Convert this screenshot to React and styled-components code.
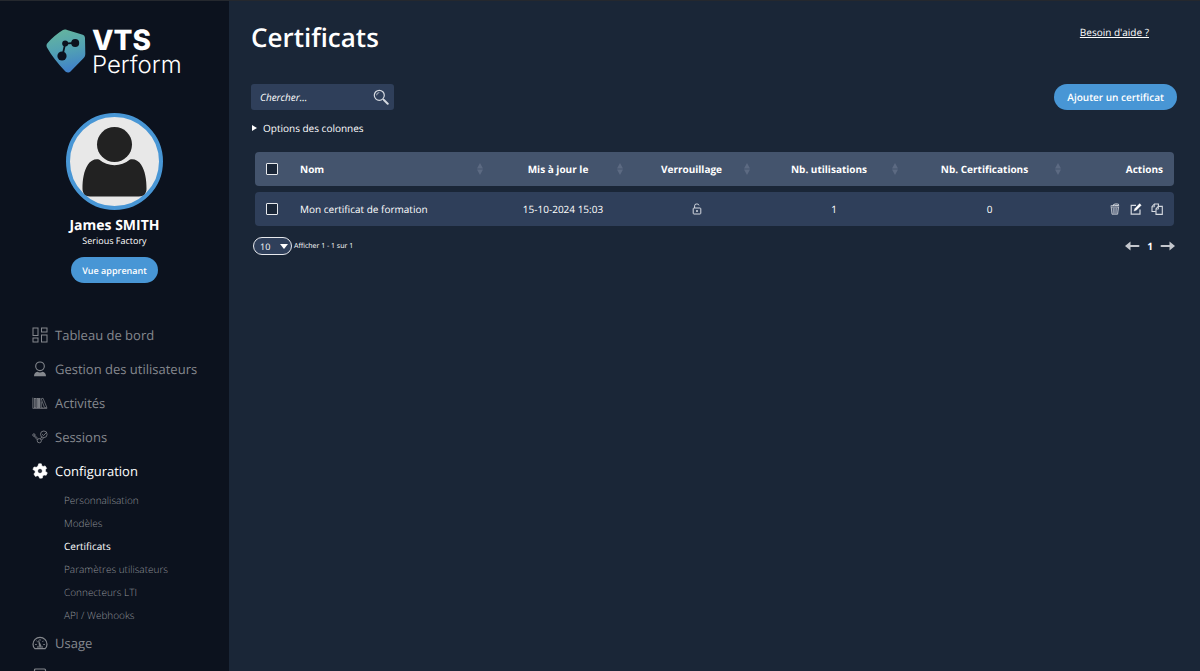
import React, { useState } from 'react'
import styled, { createGlobalStyle } from 'styled-components';

// svg icons
const DashboardIcon = () => (
  <svg width="16" height="16" viewBox="0 0 16 16" fill="none" stroke="currentColor" aria-hidden="true">
    <rect x="1" y="1" width="5" height="7.5" />
    <rect x="9.5" y="1" width="5.5" height="4" />
    <rect x="1" y="11" width="5" height="4" />
    <rect x="9.5" y="8" width="5.5" height="7" />
  </svg>
)

const UserIcon = () => (
  <svg width="16" height="16" viewBox="0 0 16 16" aria-hidden="true">
    <circle cx="8" cy="5.3" r="4.3" fill="none" stroke="currentColor" strokeWidth="1.1" />
    <path d="M2 15.3c0-2.4 1.3-3.9 3.4-4.5 1.6.8 3.6.8 5.2 0 2.1.6 3.4 2.1 3.4 4.5z" fill="currentColor" />
  </svg>
)

const BooksIcon = () => (
  <svg width="16" height="16" viewBox="0 0 16 16" fill="none" stroke="currentColor" strokeWidth="0.7" aria-hidden="true">
    <path d="M.8 2.6v10.8h14.4" />
    <rect x="2.2" y="3.4" width="2" height="9.4" fill="currentColor" fillOpacity="0.5" />
    <rect x="5.6" y="3.4" width="2.4" height="9.4" fill="currentColor" fillOpacity="0.9" />
    <path d="M9.2 3.8l1.8-.6 3.9 9.4h-2.4zM9.3 6.5v6.3h2.2" />
  </svg>
)

const SessionsIcon = () => (
  <svg width="16" height="16" viewBox="0 0 16 16" fill="none" stroke="currentColor" strokeWidth="0.8" aria-hidden="true">
    <circle cx="1.9" cy="6" r="1.2" />
    <path d="M2.2 7.3l3.1 3.6M3.1 6.7l2.800 2.900M9.500 11.200l2.300-2.600M8.500 9.800l1.400-2" />
    <circle cx="7.300" cy="11.700" r="2.100" />
    <circle cx="11.800" cy="5.300" r="3.300" />
    <path d="M10.100 5.100l1.400 1.500 3.200-3.400" />
  </svg>
)

const GearIcon = () => (
  <svg width="16" height="16" viewBox="0 0 16 16" aria-hidden="true">
    <path
      fill="currentColor"
      fillRule="evenodd"
      stroke="currentColor"
      strokeWidth="0.6"
      strokeLinejoin="round"
      d="M6.7.8h2.6l.5 2 1.3.7 2-.6 1.5 2.4-1.2 1.5.1 1.6 1.8 1.4-1.1 2.4-2.2-.2-1.2.8-.5 2.3-2.6.1-.9-1.9-1.3-.6-2.1.7L1.9 11l1.3-1.7-.1-1.5L.9 6.5l1.1-2.5 2.3.3L5.9 3.2zM8 5.7a2.300 2.300 0 1 0 0 4.600 2.300 2.300 0 0 0 0-4.600z"
    />
    <circle cx="8" cy="8" r="0.8" fill="currentColor" fillOpacity="0.3" />
  </svg>
)

const GaugeIcon = () => (
  <svg width="16" height="16" viewBox="0 0 16 16" fill="none" stroke="currentColor" strokeWidth="1.2" aria-hidden="true">
    <path d="M3 13.700C1.700 12.700 1 11 1 9.300a7 7 0 0 1 14 0c0 1.700-.7 3.400-2 4.400z" />
    <path d="M3.200 9.500h1.500M4.500 5.800l1.100 1M8 4.200v1.500M11.500 5.800l-1 1M12.800 9.500h-1.500M5 12h6" strokeWidth="1" />
    <path d="M6.600 5.500l.6 5.200a.9.900 0 0 0 1.800-.2z" fill="currentColor" strokeWidth="0.5" />
  </svg>
)

const ReportIcon = () => (
  <svg width="16" height="16" viewBox="0 0 16 16" fill="none" stroke="currentColor" strokeWidth="1.2" aria-hidden="true">
    <rect x="2.5" y="1" width="11" height="14" rx="1" />
  </svg>
)

const SearchIcon = () => (
  <svg width="16" height="16" viewBox="0 0 16 16" fill="none" stroke="currentColor" aria-hidden="true">
    <circle cx="6.3" cy="6.3" r="5" strokeWidth="1.2" />
    <path d="M3.6 6.3a2.700 2.700 0 0 1 2.700-2.700" strokeWidth="0.8" />
    <path d="M10 10l1.5 1.5" strokeWidth="1.2" />
    <path d="M11.2 11.2l3.5 3.5" strokeWidth="2" strokeLinecap="round" />
  </svg>
)

const SortIcon = () => (
  <svg width="6" height="12" viewBox="0 0 6 12" fill="currentColor" aria-hidden="true">
    <path d="M3 0l3 5.4H0zM3 12L0 6.600h6z" />
  </svg>
)

const UnlockIcon = () => (
  <svg width="10" height="12" viewBox="0 0 10 12" fill="none" stroke="currentColor" role="img" aria-label="Verrouillage">
    <rect x="1.2" y="5" width="7.6" height="6" rx="0.8" />
    <path d="M2.600 5V2.800a1.800 1.800 0 0 1 1.800-1.800h.8A1.800 1.800 0 0 1 7 2.400" />
    <circle cx="5" cy="8" r="0.6" fill="currentColor" />
  </svg>
)

const TrashIcon = () => (
  <svg width="12" height="12" viewBox="0 0 12 12" fill="none" stroke="currentColor" aria-hidden="true">
    <path d="M1.500 3.100c2-.9 6-.9 8.700-.3M4 2.300C5 .7 8 .6 10 1.500" strokeWidth="1" />
    <path d="M2.200 4l.8 7.200h5.600L9.600 4z" strokeWidth="0.8" fill="currentColor" fillOpacity="0.2" />
    <path d="M4.400 5l.3 5.500M5.900 5v5.500M7.400 5l-.3 5.500" strokeWidth="0.5" />
  </svg>
)

const EditIcon = () => (
  <svg width="12" height="12" viewBox="0 0 12 12" aria-hidden="true">
    <path d="M6 2.300H1.200v8.800H10V6.500" fill="none" stroke="currentColor" strokeWidth="1.2" />
    <path d="M9.700.6l1.600 1.600L6.300 7.300l-2.400.8.800-2.400z" fill="#fff" stroke="#fff" strokeWidth="0.3" />
  </svg>
)

const CopyIcon = () => (
  <svg width="12" height="12" viewBox="0 0 12 12" fill="none" stroke="currentColor" strokeWidth="1.1" aria-hidden="true">
    <path d="M4.800 8.500H1V3.600L3.400 1h4v2.300" />
    <path d="M1 3.800h2.600V1" strokeWidth="0.8" />
    <path d="M5 5.900l2.300-2.500h4v8H5z" />
    <path d="M5 6.100h2.500V3.500" strokeWidth="0.8" />
  </svg>
)

const ArrowIcon = ({ left }) => (
  <svg width="15" height="10" viewBox="0 0 15 10" fill="currentColor" aria-hidden="true">
    {left
      ? <path d="M0 5L5.500.5V4h8a1 1 0 0 1 0 2h-8v3.500z" />
      : <path d="M15 5L9.500.5V4h-8a1 1 0 0 0 0 2h8v3.500z" />}
  </svg>
)

const LogoMark = () => (
  <svg width="40" height="44" viewBox="0 0 40 44" aria-hidden="true">
    <defs>
      <linearGradient id="logoFill" x1="0.4" y1="0" x2="0.6" y2="1">
        <stop offset="0" stopColor="#64b49f" />
        <stop offset="0.5" stopColor="#51a0b4" />
        <stop offset="1" stopColor="#3f7fcb" />
      </linearGradient>
    </defs>
    <path
      fill="url(#logoFill)"
      d="M16.500 1.200c1.600-.8 3-.7 4.600-.2L36 5.500c2 .6 3 1.800 3 3.800l.3 15.200c0 2-.3 3-1.600 4.500L25 42c-2 2.100-4.600 2-6.300-.2C11.500 34 5.500 26.500 1 18.500c-.9-1.700-.6-3.300.8-4.700C6 9 11 4.500 16.500 1.200z"
    />
    <g fill="#0c121e">
      <path d="M16.500 26.500l2.700-12 10-.6" fill="none" stroke="#0c121e" strokeWidth="1.8" />
      <circle cx="16" cy="27" r="4.6" />
      <circle cx="19.2" cy="14.5" r="3" />
      <circle cx="29.2" cy="14" r="4" />
    </g>
  </svg>
)

const AvatarIcon = () => (
  <svg width="89" height="89" viewBox="0 0 89 89" fill="#222" role="img" aria-label="James SMITH">
    <circle cx="44.5" cy="27.5" r="17.5" />
    <path d="M29 42.500c9 7.500 22 7.500 31 0 4-1 8.500 1 11 5 4.200 6.500 5.500 15 5.500 24.500 0 4.500-3 7.500-7.500 7.500H20c-4.500 0-7.500-3-7.500-7.500 0-9.500 1.300-18 5.500-24.500 2.500-4 7-6 11-5z" />
  </svg>
)

const menu = [
  { label: 'Tableau de bord', Icon: DashboardIcon },
  { label: 'Gestion des utilisateurs', Icon: UserIcon },
  { label: 'Activités', Icon: BooksIcon },
  { label: 'Sessions', Icon: SessionsIcon },
  {
    label: 'Configuration',
    Icon: GearIcon,
    active: true,
    children: ['Personnalisation', 'Modèles', 'Certificats', 'Paramètres utilisateurs', 'Connecteurs LTI', 'API / Webhooks'],
  },
  { label: 'Usage', Icon: GaugeIcon },
]

const columns = [
  { label: 'Mis à jour le', width: 140 },
  { label: 'Verrouillage', width: 127 },
  { label: 'Nb. utilisations', width: 148 },
  { label: 'Nb. Certifications', width: 163 },
]

const rows = [
  { id: 1, name: 'Mon certificat de formation', updated: '15-10-2024 15:03', uses: 1, certifications: 0 },
]

const Sidebar = () => (
  <SidebarWrap>
    <Logo href="#">
      <LogoMark />
      <LogoText>
        <strong>VTS</strong>
        <span>Perform</span>
      </LogoText>
    </Logo>
    <Profile>
      <Avatar><AvatarIcon /></Avatar>
      <UserName>James SMITH</UserName>
      <Company>Serious Factory</Company>
      <PillButton $small type="button">Vue apprenant</PillButton>
    </Profile>
    <nav>
      <MenuList>
        {menu.map(({ label, Icon, active, children }) => (
          <li key={label}>
            <MenuLink href="#" $active={active}>
              <Icon />
              <span>{label}</span>
            </MenuLink>
            {children && (
              <MenuList>
                {children.map((child) => (
                  <li key={child}>
                    <SubLink href="#" $active={child === 'Certificats'}>{child}</SubLink>
                  </li>
                ))}
              </MenuList>
            )}
          </li>
        ))}
      </MenuList>
      <MenuFoot><ReportIcon /></MenuFoot>
    </nav>
  </SidebarWrap>
)

const App = () => {
  const [search, setSearch] = useState('')
  const [pageSize, setPageSize] = useState('10')
  const [selected, setSelected] = useState([])

  const toggleRow = (id) => {
    setSelected((prev) => prev.includes(id) ? prev.filter((item) => item !== id) : [...prev, id])
  }

  const toggleAll = () => {
    setSelected(selected.length === rows.length ? [] : rows.map((row) => row.id))
  }

  return (
    <Page>
      <GlobalStyle />
      <Sidebar />
      <Main>
        <Header>
          <Title>Certificats</Title>
          <HelpLink href="#">Besoin d'aide ?</HelpLink>
        </Header>
        <Toolbar>
          <SearchBox>
            <SearchInput
              type="text"
              aria-label="Chercher"
              placeholder="Chercher..."
              value={search}
              onChange={(e) => setSearch(e.target.value)}
            />
            <IconButton type="button" aria-label="Chercher"><SearchIcon /></IconButton>
          </SearchBox>
          <PillButton type="button">Ajouter un certificat</PillButton>
        </Toolbar>
        <ColumnOptions type="button">
          <Caret />
          Options des colonnes
        </ColumnOptions>
        <TableWrap>
          <Table>
            <colgroup>
              <col width="35" />
              <col width="203" />
              {columns.map((column) => <col key={column.label} width={column.width} />)}
              <col width="103" />
            </colgroup>
            <thead>
              <tr>
                <HeadCell>
                  <Checkbox
                    type="checkbox"
                    aria-label="Tout sélectionner"
                    checked={selected.length === rows.length}
                    onChange={toggleAll}
                  />
                </HeadCell>
                <HeadCell $align="left" $sortable>
                  Nom
                  <SortButton type="button" aria-label="Trier par Nom"><SortIcon /></SortButton>
                </HeadCell>
                {columns.map((column) => (
                  <HeadCell key={column.label} $sortable>
                    {column.label}
                    <SortButton type="button" aria-label={`Trier par ${column.label}`}><SortIcon /></SortButton>
                  </HeadCell>
                ))}
                <HeadCell $align="right">Actions</HeadCell>
              </tr>
            </thead>
            <tbody>
              {rows.map((row) => (
                <tr key={row.id}>
                  <Cell>
                    <Checkbox
                      type="checkbox"
                      aria-label={row.name}
                      checked={selected.includes(row.id)}
                      onChange={() => toggleRow(row.id)}
                    />
                  </Cell>
                  <Cell $align="left">{row.name}</Cell>
                  <Cell>{row.updated}</Cell>
                  <Cell><UnlockIcon /></Cell>
                  <Cell>{row.uses}</Cell>
                  <Cell>{row.certifications}</Cell>
                  <Cell $align="right">
                    <Actions>
                      <IconButton type="button" aria-label="Supprimer"><TrashIcon /></IconButton>
                      <IconButton type="button" aria-label="Modifier"><EditIcon /></IconButton>
                      <IconButton type="button" aria-label="Dupliquer"><CopyIcon /></IconButton>
                    </Actions>
                  </Cell>
                </tr>
              ))}
            </tbody>
          </Table>
        </TableWrap>
        <Footer>
          <PageSize>
            <select
              aria-label="Lignes par page"
              value={pageSize}
              onChange={(e) => setPageSize(e.target.value)}
            >
              <option>10</option>
              <option>25</option>
              <option>50</option>
            </select>
            <svg width="8" height="5" viewBox="0 0 8 5" fill="#fff" aria-hidden="true"><path d="M0 0h8L4 5z" /></svg>
          </PageSize>
          <Range>Afficher 1 - 1 sur 1</Range>
          <Pager>
            <IconButton type="button" aria-label="Page précédente"><ArrowIcon left /></IconButton>
            <span>1</span>
            <IconButton type="button" aria-label="Page suivante"><ArrowIcon /></IconButton>
          </Pager>
        </Footer>
      </Main>
    </Page>
  )
}

export default App

const GlobalStyle = createGlobalStyle`
  * {
    box-sizing: border-box;
  }

  body {
    margin: 0;
    background-color: #1a2637;
    color: #fff;
    font-family: 'Open Sans', 'Noto Sans', sans-serif;
    font-size: 10px;
    text-rendering: geometricPrecision;
  }

  button, input, select {
    font-family: inherit;
    color: inherit;
    text-rendering: inherit;
  }

  svg {
    display: block;
    flex-shrink: 0;
  }
`;

const Page = styled.div`
  display: flex;
  height: 100vh;
  border-top: 1px solid #25282e;
`;

const SidebarWrap = styled.aside`
  width: 229px;
  flex-shrink: 0;
  overflow: hidden;
  background-color: #0c121e;
`;

const Logo = styled.a`
  display: flex;
  gap: 6px;
  padding: 28px 0 0 46px;
  color: #fff;
  text-decoration: none;
`;

const LogoText = styled.span`
  display: flex;
  flex-direction: column;
  font-family: Inter, sans-serif;

  strong {
    font-size: 28px;
    font-weight: 800;
    line-height: 23px;
  }

  span {
    font-size: 24px;
    font-weight: 300;
    line-height: 26px;
  }
`;

const Profile = styled.div`
  display: flex;
  flex-direction: column;
  align-items: center;
  padding: 35px 0 35px;
`;

const Avatar = styled.div`
  border: 4px solid #4896d5;
  border-radius: 50%;
  background-color: #e8e8e8;
`;

const UserName = styled.div`
  margin-top: 6px;
  font-size: 14px;
  font-weight: 700;
  line-height: 20px;
`;

const Company = styled.div`
  margin-bottom: 11px;
  font-size: 9px;
  line-height: 10px;
`;

const PillButton = styled.button`
  height: 26px;
  padding: 0 ${({ $small }) => ($small ? '11px' : '13px')};
  border: none;
  border-radius: 13px;
  background-color: #4896d5;
  font-size: ${({ $small }) => ($small ? '9px' : '10px')};
  font-weight: 600;
  cursor: pointer;
`;

const MenuList = styled.ul`
  margin: 0;
  padding: 0;
  list-style: none;
`;

const MenuLink = styled.a`
  display: flex;
  align-items: center;
  gap: 7px;
  height: 34px;
  padding-left: 32px;
  color: ${({ $active }) => ($active ? '#fff' : '#85888e')};
  font-size: 13px;
  text-decoration: none;
`;

const SubLink = styled.a`
  display: flex;
  align-items: center;
  height: 23px;
  padding-left: 64px;
  color: ${({ $active }) => ($active ? '#fff' : '#92959b')};
  font-size: 10px;
  font-weight: ${({ $active }) => ($active ? 400 : 300)};
  text-decoration: none;
`;

const MenuFoot = styled.div`
  padding: 8px 0 0 32px;
  color: #85888e;
`;

const Main = styled.main`
  flex: 1;
  min-width: 0;
  padding: 16px 23px 0 22px;
`;

const Header = styled.header`
  display: flex;
  justify-content: space-between;
  align-items: flex-start;
`;

const Title = styled.h1`
  margin: 0;
  font-size: 26px;
  font-weight: 600;
  line-height: 40px;
`;

const HelpLink = styled.a`
  margin: 8px 28px 0 0;
  color: #fff;
  line-height: 15px;
`;

const Toolbar = styled.div`
  display: flex;
  justify-content: space-between;
  align-items: center;
  margin-top: 27px;
`;

const SearchBox = styled.div`
  display: flex;
  align-items: center;
  width: 143px;
  height: 26px;
  padding: 0 5px 0 9px;
  border-radius: 3px;
  background-color: #2f3f5a;
`;

const SearchInput = styled.input`
  flex: 1;
  min-width: 0;
  padding: 0;
  border: none;
  outline: none;
  background: none;
  font-size: 10px;
  font-style: italic;

  &::placeholder {
    color: #fff;
  }
`;

const IconButton = styled.button`
  display: flex;
  padding: 0;
  border: none;
  background: none;
  color: #d5d9e0;
  cursor: pointer;
`;

const ColumnOptions = styled.button`
  display: flex;
  align-items: center;
  gap: 6px;
  margin-top: 10px;
  padding: 0 1px;
  border: none;
  background: none;
  font-size: 10px;
  line-height: 16px;
  cursor: pointer;
`;

const Caret = styled.span`
  border: solid transparent;
  border-width: 3px 0 3px 5px;
  border-left-color: #fff;
`;

const TableWrap = styled.div`
  margin: 10px 3px 0 4px;
`;

const Table = styled.table`
  width: 100%;
  table-layout: fixed;
  border-collapse: separate;
  border-spacing: 0 6px;
`;

const Cell = styled.td`
  height: 34px;
  padding: 0 ${({ $align }) => ($align ? '11px' : '0')} 0 ${({ $align }) => ($align ? '10px' : '0')};
  background-color: #2f3f5a;
  font-size: 10px;
  text-align: ${({ $align }) => $align || 'center'};

  &:first-child {
    padding-right: 1px;
    border-radius: 4px 0 0 4px;
  }

  &:last-child {
    border-radius: 0 4px 4px 0;
  }

  > svg {
    margin: 0 auto;
    color: #d5d9e0;
  }
`;

const HeadCell = styled(Cell).attrs({ as: 'th' })`
  position: relative;
  background-color: #44546d;
  font-weight: 700;
  ${({ $sortable }) => $sortable && 'padding-right: 10px;'}
`;

const SortButton = styled.button`
  position: absolute;
  top: 11px;
  right: 10px;
  padding: 0;
  border: none;
  background: none;
  color: #5c6a82;
  cursor: pointer;
`;

const Checkbox = styled.input`
  display: block;
  appearance: none;
  width: 12px;
  height: 12px;
  margin: 0 auto;
  border: 1px solid #e6e8ec;
  border-radius: 1px;
  background-color: #1a2637;

  &:checked {
    background-color: #4896d5;
  }
`;

const Actions = styled.div`
  display: flex;
  justify-content: flex-end;
  gap: 9px;
`;

const Footer = styled.div`
  display: flex;
  align-items: center;
  gap: 2px;
  margin: 5px 2px 0;
`;

const PageSize = styled.div`
  position: relative;

  select {
    display: block;
    appearance: none;
    width: 39px;
    height: 18px;
    padding: 0 6px;
    border: 1px solid #e6e8ec;
    border-radius: 9px;
    background-color: #2f3f5a;
    font-size: 9px;
  }

  svg {
    position: absolute;
    top: 7px;
    right: 4px;
    pointer-events: none;
  }
`;

const Range = styled.span`
  font-size: 7px;
`;

const Pager = styled.div`
  display: flex;
  align-items: center;
  gap: 7px;
  margin-left: auto;
  font-weight: 700;

  svg {
    color: #c4c7cd;
  }
`;
